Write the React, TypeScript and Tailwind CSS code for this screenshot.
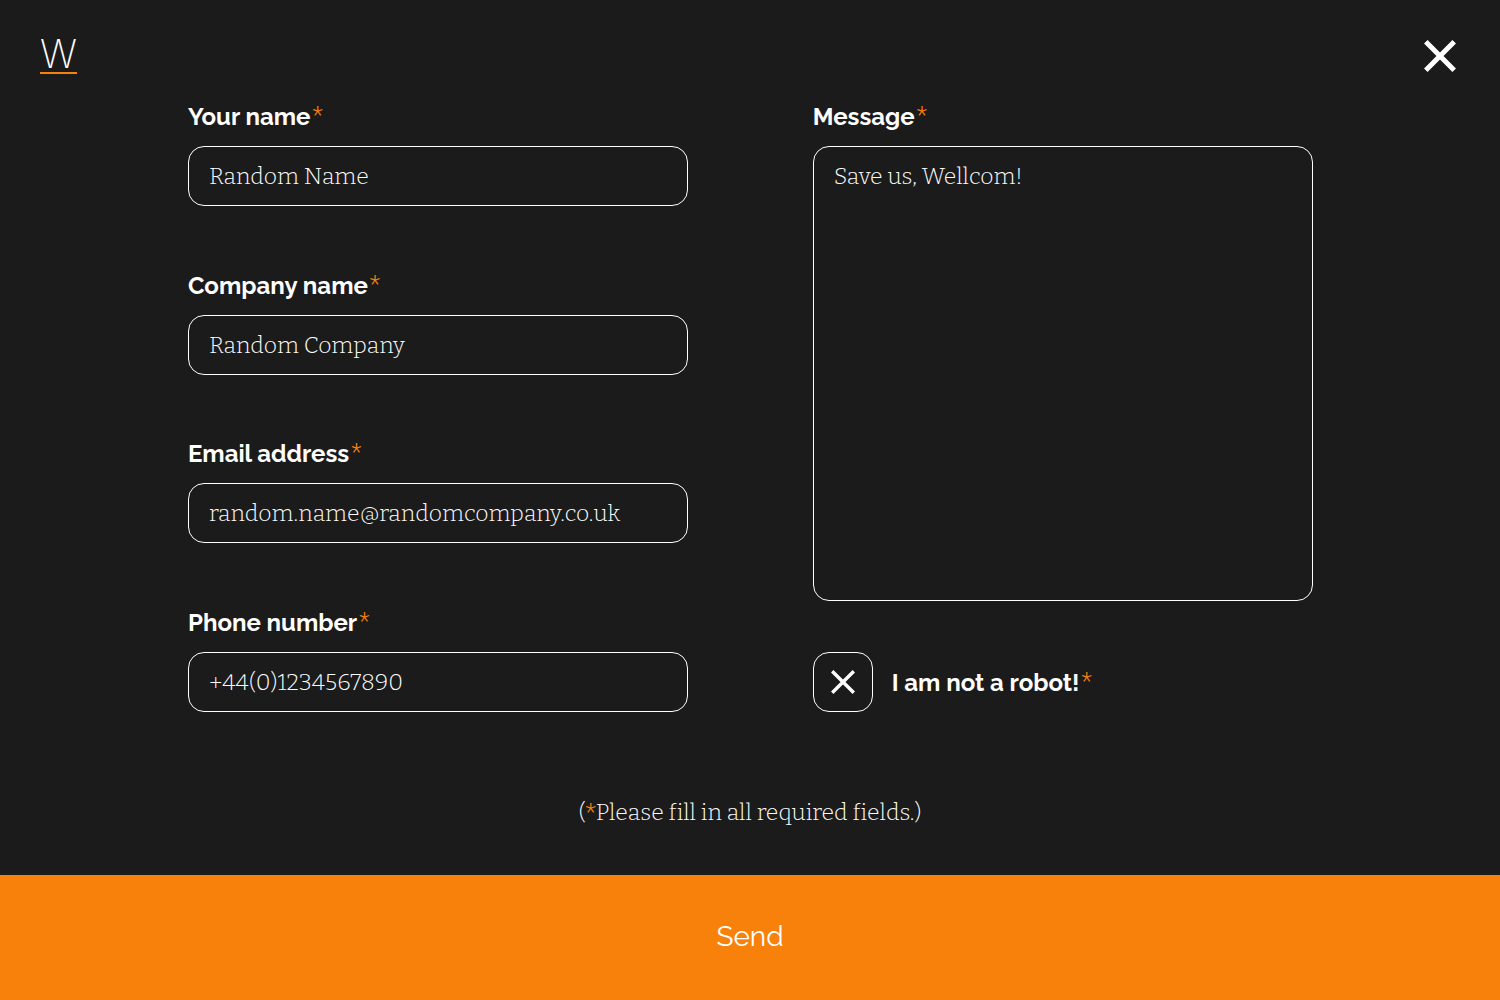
import { useState } from "react";

function Star() {
  return <span aria-hidden="true" className="font-['Roboto',sans-serif] text-[24px] leading-[26px] font-light text-[#f8810b]">*</span>;
}

const labelClass = "flex h-[30px] items-start gap-0.5 text-[24px] leading-[30px] font-bold";
const serifClass = "font-['Roboto_Slab','Bitter','Noto_Serif',serif] text-[23px] leading-[30px] font-light";
const fieldClass =
  "w-full rounded-2xl border border-white bg-transparent px-5 text-white outline-none focus-visible:ring-2 focus-visible:ring-[#f8810b]";

interface FieldProps {
  id: string;
  label: string;
  type: string;
  value: string;
}

function Field({ id, label, type, value }: FieldProps) {
  return (
    <div>
      <label htmlFor={id} className={labelClass}>
        {label}
        <Star />
      </label>
      <input
        id={id}
        name={id}
        type={type}
        required
        defaultValue={value}
        className={`${serifClass} ${fieldClass} mt-3.5 block h-15`}
      />
    </div>
  );
}

export default function App() {
  const [human, setHuman] = useState(true);

  return (
    <div className="flex min-h-screen flex-col bg-[#1b1b1b] font-['Raleway','Lato',sans-serif] text-white">
      <header className="flex items-start justify-between px-10 pt-10 pb-7">
        <a
          href="#home"
          aria-label="Home"
          className="h-[34px] border-b-2 border-[#f8810b] font-['Inter',sans-serif] text-[39px] leading-[28px] font-[150]"
        >
          W
        </a>
        <button type="button" aria-label="Close" className="mr-1 size-8">
          <svg viewBox="0 0 32 32" className="size-8" fill="none" stroke="currentColor" strokeWidth="5">
            <path d="M1.8 1.8 30.2 30.2M30.2 1.8 1.8 30.2" />
          </svg>
        </button>
      </header>

      <form className="flex grow flex-col" onSubmit={(e) => e.preventDefault()}>
        <div className="grid grid-cols-2 gap-x-[8.333vw] pr-[12.5vw] pl-[12.53vw]">
          <div className="flex flex-col justify-between">
            <Field id="name" label="Your name" type="text" value="Random Name" />
            <Field id="company" label="Company name" type="text" value="Random Company" />
            <Field id="email" label="Email address" type="email" value="random.name@randomcompany.co.uk" />
            <Field id="phone" label="Phone number" type="tel" value="+44(0)1234567890" />
          </div>

          <div>
            <label htmlFor="message" className={labelClass}>
              Message
              <Star />
            </label>
            <textarea
              id="message"
              name="message"
              required
              defaultValue="Save us, Wellcom!"
              className={`${serifClass} ${fieldClass} mt-3.5 block h-[455px] resize-none py-3.5`}
            />
            <label className="mt-[51px] flex items-center">
              <span className="grid size-15 place-items-center rounded-2xl border border-white">
                <input
                  type="checkbox"
                  checked={human}
                  onChange={(e) => setHuman(e.target.checked)}
                  className="peer col-start-1 row-start-1 size-full cursor-pointer appearance-none rounded-2xl"
                />
                <svg
                  viewBox="0 0 24 24"
                  className="pointer-events-none invisible col-start-1 row-start-1 size-6 peer-checked:visible"
                  fill="none"
                  stroke="currentColor"
                  strokeWidth="3.4"
                >
                  <path d="M1.2 1.2 22.8 22.8M22.8 1.2 1.2 22.8" />
                </svg>
              </span>
              <span className="mt-0.5 ml-[19px] flex h-[30px] items-start gap-0.5 text-[24px] leading-[30px] font-bold">
                I am not a robot!
                <Star />
              </span>
            </label>
          </div>
        </div>

        <p className={`${serifClass} mt-[85px] text-center`}>
          (<Star />Please fill in all required fields.)
        </p>

        <button type="submit" className="mt-auto h-[125px] w-full bg-[#f8810b] pb-0.5 text-[28px]">
          Send
        </button>
      </form>
    </div>
  );
}
